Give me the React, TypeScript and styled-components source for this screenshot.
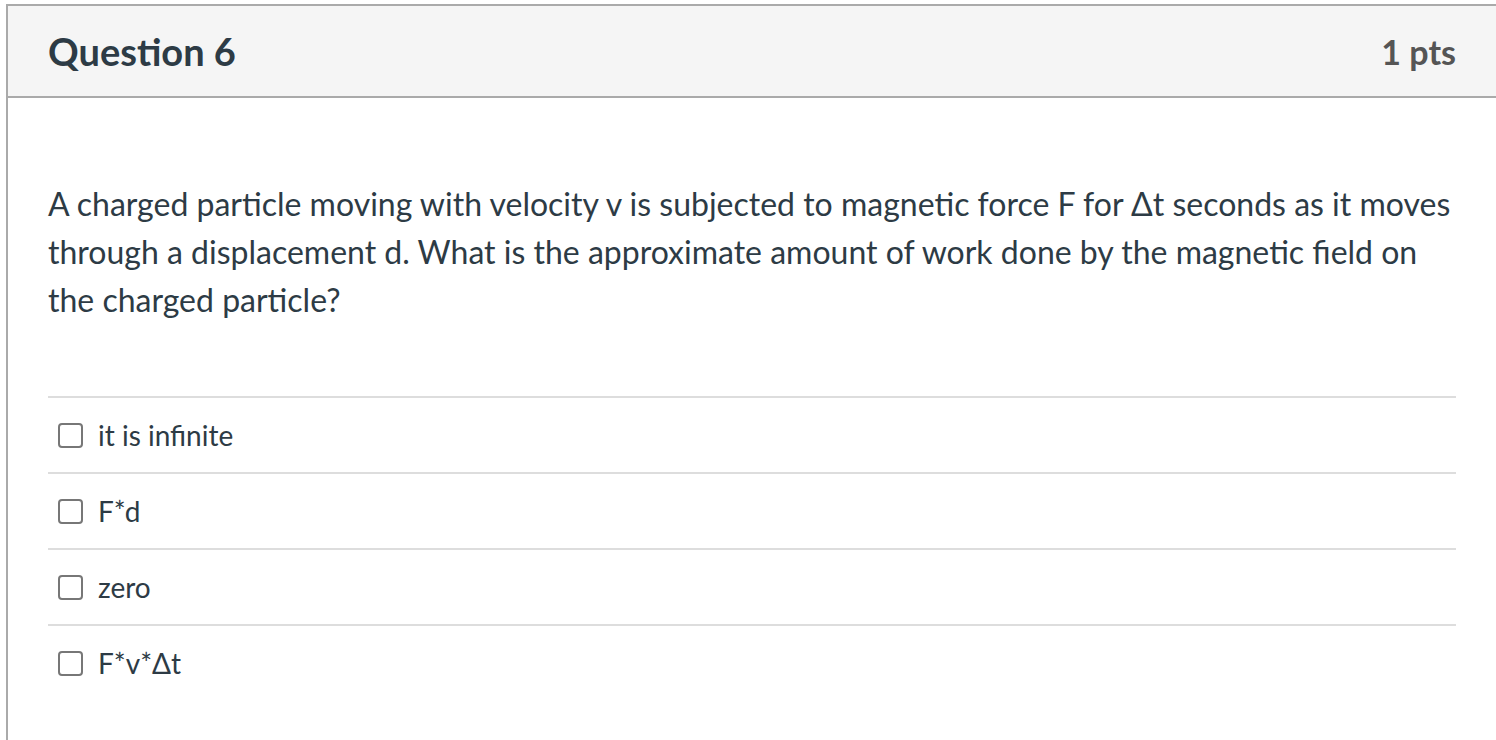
import styled, { createGlobalStyle } from 'styled-components';

const GlobalStyle = createGlobalStyle`
  html, body {
    margin: 0;
    padding: 0;
    background: #ffffff;
    overflow: hidden;
  }
  body {
    font-family: Lato, 'Open Sans', sans-serif;
    color: #2d3b45;
  }
`;

const Page = styled.div`
  padding: 4px 0 0 6px;
  height: 740px;
  box-sizing: border-box;
`;

const Card = styled.div`
  border-top: 2px solid #aaaaaa;
  border-left: 2px solid #aaaaaa;
  height: 100%;
  box-sizing: border-box;
`;

const Header = styled.div`
  display: flex;
  align-items: center;
  justify-content: space-between;
  height: 90px;
  padding: 0 40px;
  background: #f5f5f5;
  border-bottom: 2px solid #aaaaaa;
`;

const Title = styled.h2`
  margin: 0;
  font-size: 38px;
  font-weight: 700;
  color: #2d3b45;
`;

const Points = styled.div`
  font-size: 34px;
  font-weight: 700;
  color: #555555;
`;

const Body = styled.div`
  padding: 82px 40px 0 40px;
`;

const Prompt = styled.p`
  margin: 0 0 72px 0;
  font-size: 32px;
  line-height: 48px;
  color: #2d3b45;
`;

const AnswerList = styled.div`
  display: flex;
  flex-direction: column;
`;

const Answer = styled.label`
  display: flex;
  align-items: center;
  gap: 15px;
  height: 76px;
  padding-left: 10px;
  box-sizing: border-box;
  border-top: 2px solid #dddddd;
  font-size: 28px;
  color: #2d3b45;
`;

const Box = styled.span`
  width: 25px;
  height: 25px;
  box-sizing: border-box;
  border: 2px solid #777777;
  border-radius: 4px;
  background: #ffffff;
  flex-shrink: 0;
`;

const answers = ['it is infinite', 'F*d', 'zero', 'F*v*Δt'];

export default function App() {
  return (
    <>
      <GlobalStyle />
      <Page>
        <Card>
          <Header>
            <Title>Question 6</Title>
            <Points>1 pts</Points>
          </Header>
          <Body>
            <Prompt>
              A charged particle moving with velocity v is subjected to magnetic
              force F for Δt seconds as it moves through a displacement d. What
              is the approximate amount of work done by the magnetic field on
              the charged particle?
            </Prompt>
            <AnswerList>
              {answers.map(a => (
                <Answer key={a}>
                  <Box />
                  {a}
                </Answer>
              ))}
            </AnswerList>
          </Body>
        </Card>
      </Page>
    </>
  );
}
